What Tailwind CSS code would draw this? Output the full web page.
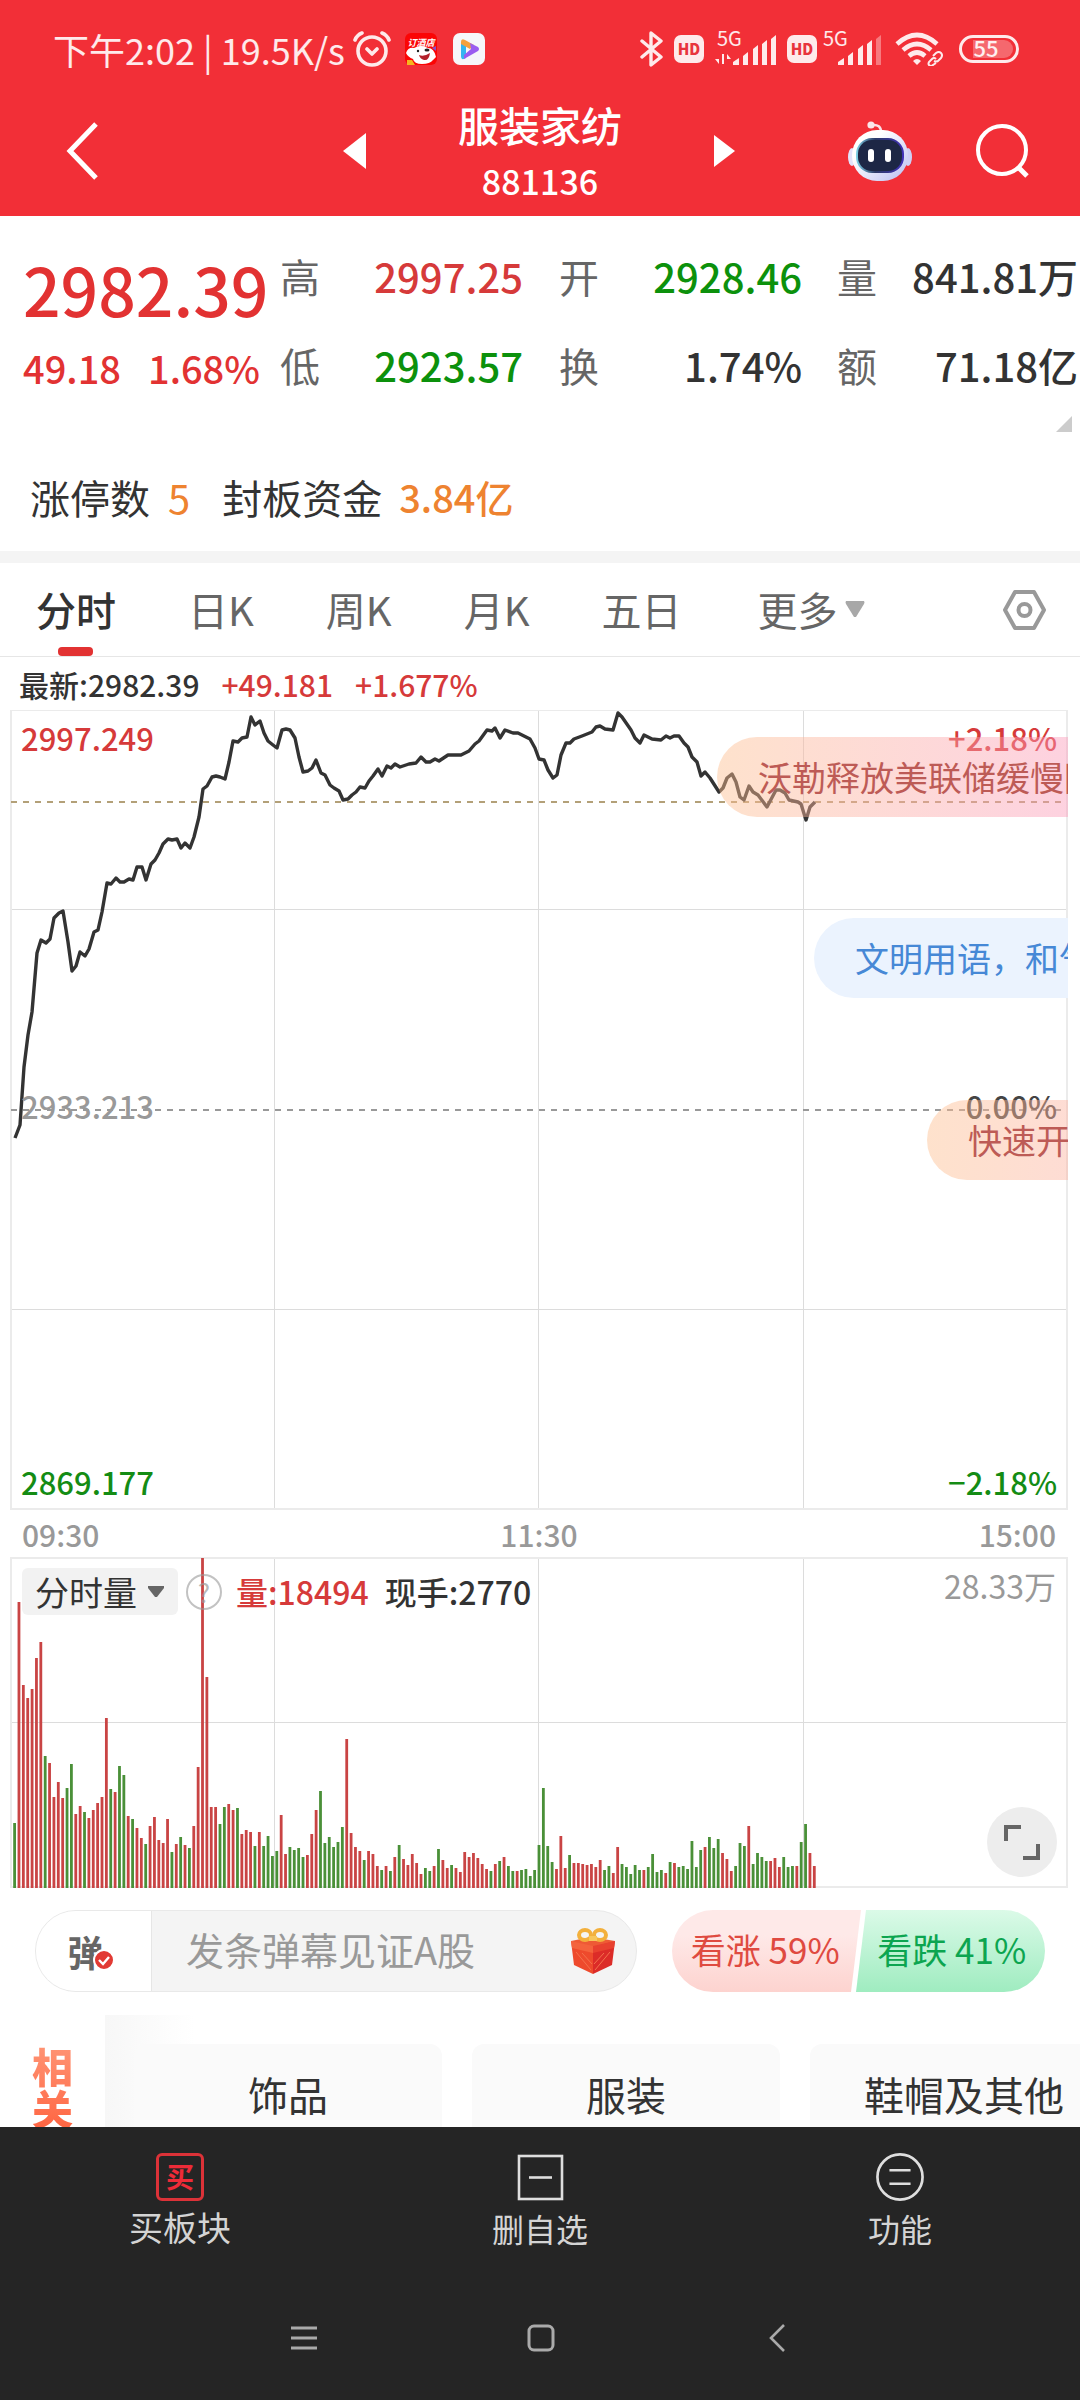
<!DOCTYPE html>
<html lang="zh-CN">
<head>
    <meta charset="UTF-8">
    <meta name="viewport" content="width=device-width, initial-scale=1.0">
    <title>服装家纺 881136</title>
    <script src="https://cdn.jsdelivr.net/npm/@tailwindcss/browser@4"></script>
    <style>
        body {
            font-family: 'Noto Sans CJK SC', sans-serif;
        }
    </style>
</head>
<body class="flex flex-col h-screen overflow-hidden bg-white text-[#333]">

    <header class="bg-[#f22f37] text-white">
        <!-- status bar -->
        <div class="flex items-center justify-between h-[98px] pl-[53px] pr-[61px] text-white/90">
            <div class="flex items-center">
                <span class="text-[36px] leading-[48px] whitespace-pre">下午2:02 | 19.5K/s</span>
                <svg class="ml-2 w-[38px] h-[36px]" viewBox="0 0 38 36" fill="none" stroke="currentColor" stroke-width="3.6" stroke-linecap="round" stroke-linejoin="round">
                    <circle cx="19" cy="20" r="14"/>
                    <path d="M2 9 Q4 4 9 2 M36 9 Q34 4 29 2 M14 18 l5 5 l5 -5"/>
                </svg>
                <svg class="ml-[14px] w-8 h-8" viewBox="0 0 32 32">
                    <rect width="32" height="32" rx="6" fill="#fb0505"/>
                    <text x="16" y="13" font-size="9" font-weight="bold" font-style="italic" text-anchor="middle" fill="#fff">订酒店</text>
                    <path d="M1 20 Q3 14 9 15 Q16 11 23 15 Q29 15 31 24 L28 27 Q25 31 17 31 Q9 31 8 26 Q3 24 1 20" fill="#fff"/>
                    <path d="M14 22 Q19 24 25 20 Q24 28 19 27 Q15 26 14 22" fill="#b3202a"/>
                    <ellipse cx="22" cy="17" rx="2.5" ry="1.6" fill="#222"/>
                    <circle cx="13" cy="18" r="1.2" fill="#222"/>
                    <path d="M2 27 h5 l3 5 h-8 z" fill="#f6b51e"/>
                    <path d="M27 15 l4 -2 v5 z" fill="#8a4fc9"/>
                </svg>
                <svg class="ml-4 w-8 h-8" viewBox="0 0 32 32">
                    <rect width="32" height="32" rx="7" fill="#f6f6fa"/>
                    <path d="M8 9 L13 11 V25 Q8 28 8 23 Z" fill="#35b6f0"/>
                    <path d="M8 9 Q8 5 12 7 L21 12 L17 16 L8 11 Z" fill="#f6a13c"/>
                    <path d="M17 10 L25 14 Q27 16 25 18 L11 26 V22 L18 16 Z" fill="#9a5cf0"/>
                </svg>
            </div>
            <div class="flex items-center">
                <svg class="w-6 h-9" viewBox="0 0 24 36" fill="none" stroke="currentColor" stroke-width="3.4" stroke-linejoin="round" stroke-linecap="round">
                    <path d="M2 10 L21 26 L11 34 V2 L21 10 L2 26"/>
                </svg>
                <span class="ml-[10px] w-[30px] h-7 rounded-[7px] bg-white/90 text-[#e8343c] text-[15px] leading-7 font-black text-center">HD</span>
                <svg class="ml-[11px] w-[62px] h-[34px] overflow-visible" viewBox="0 0 62 34" fill="currentColor">
                    <text x="2" y="14" font-size="20">5G</text>
                    <path d="M4 22 v10 l-4 -5 h4 M7 22 v10 h2 v-10 M12 32 v-10 l4 5 h-4"/>
                    <path d="M18 30 l6 -4 v7 h-6z M28 24 l5 -4 v13 h-5z M38 17 l5 -4 v20 h-5z M47 12 l5 -4 v25 h-5z M56 7 l5 -4 v30 h-5z"/>
                </svg>
                <span class="ml-[10px] w-[30px] h-7 rounded-[7px] bg-white/90 text-[#e8343c] text-[15px] leading-7 font-black text-center">HD</span>
                <svg class="ml-[5px] w-[62px] h-[34px] overflow-visible" viewBox="0 0 62 34" fill="currentColor">
                    <text x="1" y="14" font-size="20">5G</text>
                    <path d="M16 30 l6 -4 v7 h-6z M26 24 l5 -4 v13 h-5z M36 17 l5 -4 v20 h-5z M45 12 l5 -4 v25 h-5z"/>
                    <path d="M54 7 l5 -4 v30 h-5z" opacity=".4"/>
                </svg>
                <svg class="ml-[11px] w-12 h-[34px]" viewBox="0 0 48 34" fill="none" stroke="currentColor" stroke-width="4.6">
                    <path d="M2 12 Q22 -6 42 12 M8 18 Q22 6 36 18 M14 24 Q22 17 30 24"/>
                    <path d="M22 33 l-4 -4 q4 -4 8 0 z" fill="currentColor" stroke="none"/>
                    <path d="M38 24 l3 -3 q3 -2 5 0 q2 2 0 5 l-3 3 q-2 1 -4 0 M41 27 q-2 -2 -4 0 l-3 3 q-1 2 0 3 q2 2 4 0 l3 -2" stroke-width="2"/>
                </svg>
                <svg class="ml-4 w-[60px] h-7 overflow-visible" viewBox="0 0 60 28">
                    <rect x="1.5" y="1.5" width="57" height="25" rx="12.5" fill="none" stroke="currentColor" stroke-width="3"/>
                    <path d="M14 5 H45 a9 9 0 0 1 0 18 H14 z" fill="#fff" opacity=".28"/>
                    <text x="27" y="22" font-size="22" font-weight="500" text-anchor="middle" fill="currentColor">55</text>
                </svg>
            </div>
        </div>

        <!-- title bar -->
        <div class="grid grid-cols-[1fr_auto_1fr] items-center h-[118px] pb-1">
            <div class="flex items-center justify-between pl-16 pb-2">
                <button aria-label="返回">
                    <svg class="w-9 h-[58px]" viewBox="0 0 36 58" fill="none" stroke="currentColor" stroke-width="5"><path d="M32 2 L6 29 L32 56"/></svg>
                </button>
                <button aria-label="上一个">
                    <svg class="w-6 h-9" viewBox="0 0 24 36" fill="currentColor"><path d="M24 0 V36 L1 18 Z"/></svg>
                </button>
            </div>
            <div class="w-[348px] text-center font-medium">
                <h1 class="text-[41px] leading-[52px]">服装家纺</h1>
                <p class="text-[34px] leading-[62px]">881136</p>
            </div>
            <div class="flex items-center justify-between pr-[50px] pb-2">
                <button aria-label="下一个">
                    <svg class="w-[22px] h-8" viewBox="0 0 22 32" fill="currentColor"><path d="M0 0 V32 L21 16 Z"/></svg>
                </button>
                <div class="flex items-center gap-16">
                    <button aria-label="智能助手">
                        <svg class="w-16 h-[60px]" viewBox="0 0 64 60">
                            <defs>
                                <linearGradient id="shell" x1="0" y1="0" x2="1" y2="1"><stop offset=".3" stop-color="#fff"/><stop offset="1" stop-color="#b9bdf2"/></linearGradient>
                                <linearGradient id="visor" x1="0" y1="0" x2="1" y2="0"><stop stop-color="#7fd3e8"/><stop offset=".4" stop-color="#2d3a66"/><stop offset="1" stop-color="#4030b8"/></linearGradient>
                            </defs>
                            <path d="M24 4 q9 -1 9 7" fill="none" stroke="#fbdfe6" stroke-width="2.5"/>
                            <circle cx="23" cy="4" r="3.6" fill="#fbe6ea"/>
                            <ellipse cx="4" cy="36" rx="4" ry="9" fill="#e3e2fa"/>
                            <ellipse cx="60" cy="36" rx="4" ry="9" fill="#cfcff5"/>
                            <rect x="4" y="9" width="56" height="51" rx="25" fill="url(#shell)"/>
                            <rect x="8" y="17" width="48" height="35" rx="16" fill="url(#visor)"/>
                            <rect x="10" y="19" width="44" height="31" rx="14" fill="#1d2745"/>
                            <rect x="20" y="28" width="6" height="13" rx="3" fill="#fff"/>
                            <rect x="37" y="28" width="6" height="13" rx="3" fill="#fff"/>
                        </svg>
                    </button>
                    <button aria-label="搜索">
                        <svg class="w-[54px] h-[54px]" viewBox="0 0 54 54" fill="none" stroke="currentColor" stroke-width="4"><circle cx="26" cy="26" r="24"/><path d="M42 43 L51 52" stroke-width="5"/></svg>
                    </button>
                </div>
            </div>
        </div>
    </header>

    <!-- quote summary -->
    <section class="flex pl-[23px] pt-4 h-[200px]">
        <div class="w-[257px] shrink-0 text-[#e23232] font-medium">
            <div class="text-[66px] leading-[88px] pt-3 pb-1">2982.39</div>
            <div class="flex gap-[27px] text-[38px] leading-[64px]"><span>49.18</span><span>1.68%</span></div>
        </div>
        <dl class="flex-1 grid grid-cols-[243px_36px_243px_35px_1fr] content-start text-[40px] leading-[89px] pr-[2px]">
            <div class="flex justify-between"><dt class="text-[#666]">高</dt><dd class="font-medium text-[#d63a3a]">2997.25</dd></div>
            <div class="col-start-3 flex justify-between"><dt class="text-[#666]">开</dt><dd class="font-medium text-[#0c910c]">2928.46</dd></div>
            <div class="col-start-5 flex justify-between"><dt class="text-[#666]">量</dt><dd class="font-medium">841.81万</dd></div>
            <div class="flex justify-between"><dt class="text-[#666]">低</dt><dd class="font-medium text-[#0c910c]">2923.57</dd></div>
            <div class="col-start-3 flex justify-between"><dt class="text-[#666]">换</dt><dd class="font-medium">1.74%</dd></div>
            <div class="col-start-5 flex justify-between"><dt class="text-[#666]">额</dt><dd class="font-medium">71.18亿</dd></div>
        </dl>
    </section>
    <div class="flex justify-end pr-2">
        <svg class="w-4 h-4" viewBox="0 0 16 16" fill="#ccc"><path d="M16 0 V16 H0 Z"/></svg>
    </div>
    <section class="flex items-center h-[119px] pl-[30px] pt-[10px] text-[40px] leading-[56px]">
        <span>涨停数</span>
        <span class="ml-[18px] text-[#ee8330]">5</span>
        <span class="ml-8">封板资金</span>
        <span class="ml-[17px] text-[38px] font-medium text-[#ee8330]">3.84亿</span>
    </section>
    <div class="h-3 bg-[#f4f4f4] shrink-0"></div>

    <!-- period tabs -->
    <nav class="flex items-center h-[94px] pl-9 pr-[34px] shrink-0 border-b border-[#e6e6e6] text-[40px] leading-[93px] text-[#666]">
        <div class="flex gap-[72px]">
            <button class="relative font-medium text-[#333]">分时<span class="absolute left-[22px] bottom-0 w-[35px] h-[9px] rounded-[4px] bg-[#e23232]"></span></button>
            <button>日K</button>
            <button>周K</button>
            <button>月K</button>
            <button>五日</button>
            <button class="flex items-center gap-[7px] ml-1">更多
                <svg class="w-5 h-[17px]" viewBox="0 0 20 17" fill="#a8a8a8"><path d="M1 0 H19 Q20 1 19 3 L11 16 H9 L1 3 Q0 1 1 0"/></svg>
            </button>
        </div>
        <button class="ml-auto" aria-label="设置">
            <svg class="w-[43px] h-10" viewBox="0 0 43 40" fill="none" stroke="#999" stroke-width="4" stroke-linejoin="round"><path d="M12 2 H31 L41 20 L31 38 H12 L2 20 Z"/><circle cx="21.5" cy="20" r="6"/></svg>
        </button>
    </nav>
    <div class="flex gap-[22px] h-[53px] shrink-0 pl-[19px] text-[30px] leading-[54px] font-medium">
        <span>最新:2982.39</span>
        <span class="text-[#d63a3a]">+49.181</span>
        <span class="text-[#d63a3a]">+1.677%</span>
    </div>

    <!-- price chart -->
    <section class="relative ml-[10px] mr-3 h-[800px] shrink-0 overflow-hidden text-[31px] leading-[44px] font-medium">
        <svg class="block w-full h-full" viewBox="10 710 1058 800" preserveAspectRatio="none" fill="none">
            <g stroke="#dcdcdc">
                <path d="M10 909.5 H1067 M10 1309.5 H1067 M274.5 710 V1510 M538.5 710 V1510 M803.5 710 V1510"/>
                <rect x="11" y="710" width="1056" height="799" stroke="#ebebeb" stroke-width="2"/>
            </g>
            <path d="M11 802 H1067" stroke="#b3a078" stroke-width="2" stroke-dasharray="6 6"/>
            <path d="M11 1110 H1067" stroke="#999" stroke-width="2" stroke-dasharray="6 6"/>
            <polyline id="priceLine" stroke="#333" stroke-width="3.4" stroke-linejoin="round"/>
        </svg>
        <span class="absolute left-[11px] top-[6px] text-[#d63a3a]">2997.249</span>
        <span class="absolute right-[11px] top-[6px] text-[#d63a3a]">+2.18%</span>
        <span class="absolute left-[11px] top-[374px] text-[#999]">2933.213</span>
        <span class="absolute right-[11px] top-[374px] text-[#444]">0.00%</span>
        <span class="absolute left-[11px] bottom-[6px] text-[#148c14]">2869.177</span>
        <span class="absolute right-[11px] bottom-[6px] text-[#148c14]">−2.18%</span>

        <!-- danmaku -->
        <div class="absolute left-[707px] top-[27px] w-[500px] h-20 pl-[41px] rounded-full bg-linear-to-r from-[#fdbe8e]/45 to-[#fb9ab9]/45 to-70% text-[34px] leading-20 font-normal text-[#bd5b56] whitespace-nowrap">沃勒释放美联储缓慢降息</div>
        <div class="absolute left-[804px] top-[208px] w-[400px] h-20 pl-[41px] rounded-full bg-[#ebf3fe] text-[34px] leading-20 font-normal text-[#4688d6] whitespace-nowrap">文明用语，和气生财</div>
        <div class="absolute left-[917px] top-[390px] w-[400px] h-20 pl-[41px] rounded-full bg-linear-to-r from-[#fdbe8e]/45 to-[#fb9ab9]/45 text-[34px] leading-20 font-normal text-[#bd5b56] whitespace-nowrap">快速开户</div>
    </section>
    <div class="grid grid-cols-3 h-[47px] shrink-0 pl-[22px] pr-6 text-[30px] leading-[49px] font-medium text-[#999]">
        <span>09:30</span>
        <span class="text-center">11:30</span>
        <span class="text-right">15:00</span>
    </div>

    <!-- volume chart -->
    <section class="relative ml-[10px] mr-3 h-[331px] shrink-0">
        <svg class="block w-full h-full" viewBox="0 0 1058 331" preserveAspectRatio="none" fill="none">
            <path d="M0 165.5 H1058 M264.5 0 V331 M528.5 0 V331 M793.5 0 V331" stroke="#dcdcdc"/>
            <rect x="1" y="1" width="1056" height="329" stroke="#ebebeb" stroke-width="2"/>
            <path id="upBars" stroke="#c94444" stroke-width="2.8"/>
            <path id="downBars" stroke="#4a9038" stroke-width="2.8"/>
        </svg>
        <div class="absolute inset-x-3 top-[11px] flex items-center text-[32px] leading-[47px] font-medium">
            <div class="relative">
                <select aria-label="指标" class="appearance-none block w-[156px] h-[47px] pl-[13px] rounded-md bg-[#f2f2f2] text-[34px] leading-[47px] font-normal">
                    <option>分时量</option>
                </select>
                <svg class="absolute right-[14px] top-[18px] w-4 h-3 pointer-events-none" viewBox="0 0 16 12" fill="#666"><path d="M0 0 H16 V2 L9 11 H7 L0 2 Z"/></svg>
            </div>
            <button aria-label="说明" class="ml-2 w-9 h-9 rounded-full border-2 border-[#999]/60 text-[26px] leading-8 font-normal text-[#999]/70">?</button>
            <span class="ml-[14px] text-[#d63a3a]">量:18494</span>
            <span class="ml-4">现手:2770</span>
            <span class="ml-auto -mt-3 font-normal text-[#999]">28.33万</span>
        </div>
        <button aria-label="全屏" class="absolute right-[11px] bottom-[11px] w-[70px] h-[70px] rounded-full bg-[#ededed]">
            <svg class="w-[70px] h-[70px]" viewBox="0 0 70 70" fill="none" stroke="#666" stroke-width="4"><path d="M19 34 V20 H34 M51 37 V51 H36"/></svg>
        </button>
    </section>

    <!-- comment box and poll -->
    <section class="flex items-center h-[82px] mt-[22px] pl-[35px] pr-[35px] shrink-0">
        <div class="flex items-center w-[602px] h-[82px] rounded-full border border-[#e9e9e9] bg-[#f4f4f4] overflow-hidden">
            <button aria-label="弹幕开关" class="relative w-[116px] h-[82px] pr-4 shrink-0 bg-white border-r border-[#e6e6e6] text-[36px] leading-[74px] font-bold text-[#666]">弹<svg class="absolute left-[57px] top-[39px] w-[22px] h-[22px]" viewBox="0 0 22 22"><circle cx="11" cy="11" r="10" fill="#e23a34" stroke="#fff" stroke-width="2"/><path d="M6 11 l4 4 l6 -7" fill="none" stroke="#fff" stroke-width="2.4"/></svg></button>
            <input type="text" aria-label="弹幕" placeholder="发条弹幕见证A股" class="flex-1 min-w-0 pl-[34px] pb-[6px] h-full text-[38px] outline-none placeholder:text-[#999]">
            <button aria-label="礼物" class="mr-[21px]">
                <svg class="block w-11 h-12" viewBox="0 0 44 48">
                    <path d="M0 14 L20 10 L44 14 L22 22 Z" fill="#ee5a35"/>
                    <path d="M0 14 L22 20 V47 L3 38 Z" fill="#ee4a2c"/>
                    <path d="M44 14 L22 20 V47 L41 38 Z" fill="#dc2c28"/>
                    <path d="M0 14 L22 19 V26 L1 21 Z" fill="#f4633d"/>
                    <path d="M44 14 L22 19 V26 L43 21 Z" fill="#e8412f"/>
                    <path d="M5 25 L20 43 M11 26 L21 37 M39 25 L24 43 M33 26 L23 37" stroke="#f4714c" stroke-width="1"/>
                    <g fill="none" stroke="#f3b03c" stroke-width="4"><ellipse cx="14" cy="8" rx="6" ry="5"/><ellipse cx="29" cy="8" rx="6" ry="5"/></g>
                    <path d="M18 9 h8 v5 h-8 z" fill="#f7c65a"/>
                </svg>
            </button>
        </div>
        <div class="relative flex ml-auto w-[373px] h-[82px] text-[35px] leading-[78px]">
            <svg class="absolute inset-0 w-full h-full" viewBox="0 0 373 82">
                <defs>
                    <linearGradient id="up" x1="0" y1="0" x2="0" y2="1"><stop offset=".3" stop-color="#fee9e8"/><stop offset="1" stop-color="#fdd3cf"/></linearGradient>
                    <linearGradient id="down" x1="0" y1="0" x2="0" y2="1"><stop stop-color="#dbfae8"/><stop offset="1" stop-color="#9fecc0"/></linearGradient>
                </defs>
                <path d="M41 0 H189 L179 82 H41 A41 41 0 0 1 41 0" fill="url(#up)"/>
                <path d="M194 0 H332 A41 41 0 0 1 332 82 H184 Z" fill="url(#down)"/>
            </svg>
            <button class="relative flex-1 pb-1 text-[#df4a40]">看涨 59%</button>
            <button class="relative flex-1 pb-1 text-[#0ca550]">看跌 41%</button>
        </div>
    </section>

    <!-- related sectors -->
    <section class="flex flex-1 min-h-0 mt-[23px] overflow-hidden">
        <h2 class="w-[105px] shrink-0 pl-8 pt-[29px] text-[41px] leading-[42px] font-black"><span class="block w-[41px] bg-linear-to-b from-[#ff9474] to-[#ff6542] bg-clip-text text-transparent">相关</span></h2>
        <div class="flex flex-1 gap-[30px] min-w-0 pl-[29px] pt-[29px] overflow-hidden bg-linear-to-r from-[#f7f7f7] to-white to-[90px] text-[40px] leading-[100px] text-center">
            <a href="#" class="w-[308px] shrink-0 rounded-t-xl bg-[#fafafa]">饰品</a>
            <a href="#" class="w-[308px] shrink-0 rounded-t-xl bg-[#fafafa]">服装</a>
            <a href="#" class="w-[308px] shrink-0 rounded-t-xl bg-[#fafafa]">鞋帽及其他</a>
        </div>
    </section>

    <!-- bottom actions -->
    <footer class="shrink-0 h-[273px] bg-[#252525] text-[#d4d4d4]">
        <div class="grid grid-cols-3 h-[144px] pt-[26px]">
            <button class="flex flex-col items-center gap-[2px] text-[34px] leading-[48px]">
                <span class="w-12 h-12 rounded-md border-3 border-[#dc3238] text-[28px] leading-[40px] font-bold text-[#ee2b38]">买</span>买板块
            </button>
            <button class="flex flex-col items-center gap-[2px] text-[32px] leading-[50px]">
                <svg class="w-12 h-12" viewBox="0 0 48 48" fill="none" stroke="#dedede" stroke-width="2.6"><rect x="3" y="3" width="43" height="43"/><path d="M13 24.5 H36"/></svg>删自选
            </button>
            <button class="flex flex-col items-center gap-[2px] text-[32px] leading-[50px]">
                <svg class="w-[50px] h-12" viewBox="0 0 50 50" fill="none" stroke="#dedede" stroke-width="2.8"><circle cx="25" cy="25" r="23.5"/><path d="M14 18 H36 M14 32 H36"/></svg>功能
            </button>
        </div>
        <div class="flex items-center justify-center gap-[209px] h-[134px] pl-[2px] text-[#aaa]">
            <button aria-label="菜单"><svg class="block w-7 h-7" viewBox="0 0 28 28" fill="none" stroke="currentColor" stroke-width="3"><path d="M1 4 H27 M1 14 H27 M1 24 H27"/></svg></button>
            <button aria-label="主页"><svg class="block w-7 h-7" viewBox="0 0 28 28" fill="none" stroke="currentColor" stroke-width="3"><rect x="2" y="2" width="24" height="24" rx="5"/></svg></button>
            <button aria-label="后退"><svg class="block w-7 h-7" viewBox="0 0 28 28" fill="none" stroke="currentColor" stroke-width="2.6"><path d="M20 1 L7 14 L20 27"/></svg></button>
        </div>
    </footer>

    <script>
        const prices = '15,1138 20,1125 24,1067 28,1035 32,1012 37,953 41,940 46,943 50,939 54,918 59,913 63,911 68,942 72,971 76,966 80,952 85,956 89,949 94,932 98,930 102,912 107,883 111,884 116,878 120,882 124,882 129,879 133,880 137,867 142,867 146,880 151,864 155,860 159,853 163,844 168,839 172,840 177,839 181,848 185,843 190,848 194,837 199,817 203,789 207,786 212,777 216,776 220,777 225,779 229,762 233,741 238,742 242,738 247,737 251,717 255,725 260,721 264,733 268,741 273,745 277,748 282,730 286,729 290,730 295,738 299,757 303,772 308,771 312,768 316,760 321,773 325,775 330,785 334,788 339,791 343,800 348,799 352,795 356,792 360,787 365,788 369,781 373,776 378,769 382,776 387,766 391,768 395,764 400,767 409,764 416,763 421,757 426,762 430,762 435,759 439,761 448,755 461,755 469,751 475,744 479,741 487,730 492,731 495,728 500,738 505,730 513,733 518,733 530,739 535,748 539,759 544,760 548,770 553,778 557,775 561,755 566,743 570,743 574,739 582,736 592,732 596,727 600,726 605,729 613,730 618,713 622,717 631,730 635,738 640,743 644,735 652,739 661,740 666,736 670,738 674,736 679,736 684,743 688,747 692,757 697,762 701,776 705,772 710,778 719,792 723,788 727,778 732,774 736,782 740,797 744,800 749,786 753,792 758,795 767,807 776,790 780,790 785,793 789,800 798,802 801,804 806,820 810,807 815,802';
        document.getElementById('priceLine').setAttribute('points', prices);

        // one bar per minute, negative = down
        const volumes = [
            -65, 286, 203, 190, 199, 230, 246, -132, 125, 91, 106, 90, -100, -124, 74, 82, -76, 70, 78, 85,
            91, 170, -99, 96, -122, -113, 72, -69, 60, 50, -44, 62, 71, 48, 45, 69, -36, 44, -51, 43,
            -40, 62, 121, 330, 211, 81, 81, -64, -81, 84, 78, -80, 54, 58, 56, -42, 56, -42, -52, -32,
            -37, 73, 34, -41, -38, -40, -31, 33, 54, 78, -97, -45, -51, -41, -46, -61, 149, 55, 41, 37,
            -28, 37, 34, 22, -18, 22, -17, 31, -43, 29, 23, 34, 25, 14, -20, -17, 22, -39, 28, 20,
            -23, 20, 16, 36, 31, 35, 30, 24, 19, -17, 24, -27, 31, -22, -17, 17, -18, -19, -12, -18,
            -43, -100, -42, -26, 19, 52, 20, -33, 25, 25, 24, 23, 24, 21, 28, -18, -22, 15, 41, -24,
            -21, -14, -23, -18, 18, -21, -34, -16, -18, 15, -26, 25, -21, -22, -19, -47, -21, -38, 41, -51,
            -40, -49, 35, 29, 17, -22, -45, -42, 62, -24, -35, -31, -27, 27, 30, 21, -31, -21, -22, 22,
            -46, -64, 35, 22
        ];
        let up = '';
        let down = '';
        volumes.forEach((v, i) => {
            const bar = `M${(4.6 + i * 4.37).toFixed(2)} 331 v${-Math.abs(v)} `;
            if (v > 0) up += bar;
            else down += bar;
        });
        document.getElementById('upBars').setAttribute('d', up);
        document.getElementById('downBars').setAttribute('d', down);
    </script>
</body>
</html>
